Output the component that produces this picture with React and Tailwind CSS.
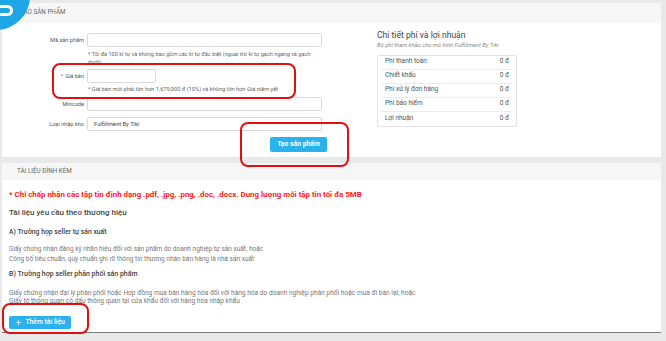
import React from "react";

const font = { fontFamily: "Roboto, 'Liberation Sans', Arial, sans-serif" };

function Row({ label, required, children }) {
  return (
    <div className="flex items-center">
      <div className="w-[85px] pr-[3px] text-right text-[5.6px] text-[#555]">
        {required && <span className="text-[#e53935] mr-[2px]">*</span>}
        {label}
      </div>
      {children}
    </div>
  );
}

const Input = ({ w = "w-[235px]", children }) => (
  <div className={`${w} h-[14px] border border-[#d9d9d9] rounded-[2px] bg-white flex items-center px-[6px] text-[5.8px] text-[#444]`}>
    {children}
  </div>
);

const fees = ["Phí thanh toán", "Chiết khấu", "Phí xử lý đơn hàng", "Phí bảo hiểm", "Lợi nhuận"];

export default function App() {
  return (
    <div style={font} className="w-[666px] h-[341px] overflow-hidden bg-[#e9e9e9] relative">
      <div className="pt-[3px] pl-[2px] w-[661px]">
        {/* Card 1 */}
        <div className="bg-white h-[154px]">
          <div className="h-[20px] bg-[#f6f6f6] flex items-center pl-[18px] text-[6.3px] text-[#666]">
            TẠO SẢN PHẨM
          </div>
          <div className="flex">
            <div className="w-[330px] pt-[10px]">
              <Row label="Mã sản phẩm">
                <Input />
              </Row>
              <div className="ml-[86px] mt-[3px] w-[235px] h-[13px] overflow-hidden text-[5.6px] leading-[8px] text-[#666]">
                * Tối đa 100 kí tự và không bao gồm các kí tự đặc biệt (ngoại trừ kí tự gạch ngang và gạch dưới)
              </div>
              <div className="mt-[6px]">
                <Row label="Giá bán" required>
                  <Input w="w-[69px]" />
                </Row>
              </div>
              <div className="ml-[86px] mt-[2px] h-[11px] text-[5.7px] leading-[8px] text-[#666]">
                * Giá bán mới phải lớn hơn 1,679,000 đ (10%) và không lớn hơn Giá niêm yết
              </div>
              <div className="mt-[1px]">
                <Row label="Mincode">
                  <Input />
                </Row>
              </div>
              <div className="mt-[6px]">
                <Row label="Loại nhập kho">
                  <Input>Fulfillment By Tiki</Input>
                </Row>
              </div>
              <div className="flex justify-end pr-[5px] mt-[6px]">
                <div className="w-[57px] h-[15px] rounded-[2px] bg-[#2bb1ec] text-white text-[6.8px] font-bold flex items-center justify-center">
                  Tạo sản phẩm
                </div>
              </div>
            </div>
            <div className="ml-[45px] pt-[7px]">
              <div className="text-[8.6px] text-[#444] leading-[10px]">Chi tiết phí và lợi nhuận</div>
              <div className="text-[5.8px] italic text-[#888] mt-[1px]">Bộ phí tham khảo cho mô hình Fulfillment By Tiki</div>
              <div className="mt-[5px] w-[140px] border border-[#e3e3e3] rounded-[2px] px-[3px]">
                {fees.map((f, i) => (
                  <div
                    key={f}
                    className={`h-[14px] flex items-center justify-between pl-[4px] pr-[4px] text-[6.5px] text-[#555] ${i < fees.length - 1 ? "border-b border-[#ececec]" : ""}`}
                  >
                    <span>{f}</span>
                    <span>0 đ</span>
                  </div>
                ))}
              </div>
            </div>
          </div>
        </div>

        {/* Card 2 */}
        <div className="mt-[6px] bg-white h-[170px] border-b border-[#7a7a7a]">
          <div className="h-[17px] bg-[#f6f6f6] flex items-center pl-[15px] text-[6.3px] text-[#666]">
            TÀI LIỆU ĐÍNH KÈM
          </div>
          <div className="pl-[7px] pt-[10px]">
            <div className="text-[7.9px] font-bold text-[#ff1a1a] leading-[10px]">
              * Chỉ chấp nhận các tập tin định dạng .pdf, .jpg, .png, .doc, .docx. Dung lượng mỗi tập tin tối đa 5MB
            </div>
            <div className="mt-[8px] text-[8px] font-medium text-[#444] leading-[10px]">
              Tài liệu yêu cầu theo thương hiệu
            </div>
            <div className="mt-[10px] text-[6.8px] font-medium text-[#444] leading-[9px]">
              A) Trường hợp seller tự sản xuất
            </div>
            <div className="mt-[7px] text-[6.5px] text-[#777] leading-[10px]">
              <div>Giấy chứng nhận đăng ký nhãn hiệu đối với sản phẩm do doanh nghiệp tự sản xuất, hoặc</div>
              <div>Công bố tiêu chuẩn, quy chuẩn ghi rõ thông tin thương nhân bán hàng là nhà sản xuất</div>
            </div>
            <div className="mt-[6px] text-[7px] font-medium text-[#444] leading-[9px]">
              B) Trường hợp seller phân phối sản phẩm
            </div>
            <div className="mt-[10px] text-[6.6px] text-[#777] leading-[8px]">
              <div>Giấy chứng nhận đại lý phân phối hoặc Hợp đồng mua bán hàng hóa đối với hàng hóa do doanh nghiệp phân phối hoặc mua đi bán lại; hoặc</div>
              <div>Giấy tờ thông quan có dấu thông quan tại cửa khẩu đối với hàng hóa nhập khẩu</div>
            </div>
            <div className="mt-[11px] w-[62px] h-[13px] rounded-[2px] bg-[#2bb1ec] text-white text-[6.8px] font-medium flex items-center justify-center gap-[4px]">
              <span className="text-[11px] font-light leading-none">+</span>
              <span>Thêm tài liệu</span>
            </div>
          </div>
        </div>
      </div>

      {/* Blue circle top-left */}
      <div className="absolute left-[-38px] top-[-38px] w-[68px] h-[68px] rounded-full bg-[#1ea6e6]" />
      <svg className="absolute left-0 top-0" width="20" height="24" viewBox="0 0 20 24">
        <path d="M-2 6.5 H7.5 A4 4 0 0 1 7.5 14.5 H-2" fill="none" stroke="white" strokeWidth="3" />
      </svg>

      {/* Red annotation boxes */}
      <div className="absolute left-[52px] top-[63px] w-[244px] h-[36px] border-[2.5px] border-[#e01010] rounded-[8px]" />
      <div className="absolute left-[240px] top-[122px] w-[109px] h-[45px] border-[2.5px] border-[#e01010] rounded-[8px]" />
      <div className="absolute left-[2px] top-[303px] w-[87px] h-[31px] border-[2.5px] border-[#e01010] rounded-[8px]" />
    </div>
  );
}
